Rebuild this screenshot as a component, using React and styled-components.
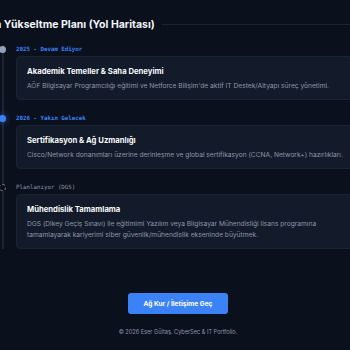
import React from "react";
import styled, { createGlobalStyle } from "styled-components";

const Global = createGlobalStyle`
  html, body { margin: 0; padding: 0; background: #0b101d; overflow: hidden; }
  body { font-family: Inter, "Noto Sans", sans-serif; width: 350px; height: 350px; }
  #root { width: 350px; }
`;

const Page = styled.div`
  width: 350px;
  height: 350px;
  background: #0b101d;
  display: flex;
  flex-direction: column;
`;

const HeaderRow = styled.div`
  display: flex;
  align-items: center;
  gap: 7px;
  margin-top: 16px;
  margin-left: -53px;
  height: 16px;
`;

const Title = styled.h2`
  margin: 0;
  font-size: 10.5px;
  font-weight: 700;
  color: #f1f5f9;
  white-space: nowrap;
`;

const Rule = styled.div`
  flex: 1;
  height: 1px;
  background: #1a2233;
`;

const Timeline = styled.div`
  margin-top: 13px;
  margin-left: 2px;
  margin-right: -4px;
  padding-left: 12px;
  border-left: 2px solid #1c2434;
  display: flex;
  flex-direction: column;
  gap: 14px;
`;

const Item = styled.div`
  position: relative;
  display: flex;
  flex-direction: column;
  gap: 3px;
`;

const Dot = styled.span`
  position: absolute;
  left: -17.5px;
  top: 0.5px;
  width: 7px;
  height: 7px;
  border-radius: 50%;
  box-sizing: border-box;
  background: ${(p) => (p.$kind === "active" ? "#3b82f6" : p.$kind === "done" ? "#94a3b8" : "#0b101d")};
  border: ${(p) => (p.$kind === "planned" ? "1px dashed #64748b" : "none")};
  box-shadow: ${(p) => (p.$kind === "active" ? "0 0 6px rgba(59,130,246,0.7)" : "none")};
`;

const DateLabel = styled.div`
  font-family: "DejaVu Sans Mono", "Liberation Mono", monospace;
  font-size: 5.8px;
  line-height: 8px;
  font-weight: ${(p) => (p.$muted ? 400 : 700)};
  color: ${(p) => (p.$muted ? "#8b95a7" : "#3b82f6")};
  white-space: nowrap;
`;

const Card = styled.div`
  background: #131a29;
  border: 1px solid #1a2233;
  border-radius: 4px;
  padding: 9px 10px 7px 10px;
  display: flex;
  flex-direction: column;
  gap: 3px;
`;

const CardTitle = styled.h3`
  margin: 0;
  font-size: 7.7px;
  line-height: 12px;
  font-weight: 700;
  color: #f8fafc;
`;

const CardText = styled.p`
  margin: 0;
  font-size: 6.65px;
  line-height: 11px;
  color: #8d97aa;
`;

const Actions = styled.div`
  display: flex;
  justify-content: center;
  margin-top: 44px;
  padding-left: 6px;
`;

const Button = styled.button`
  width: 100px;
  height: 21px;
  border: none;
  border-radius: 3px;
  background: #3b82f6;
  color: #ffffff;
  font-family: Inter, "Noto Sans", sans-serif;
  font-size: 6.6px;
  font-weight: 700;
  cursor: pointer;
`;

const Footer = styled.footer`
  margin-top: 14px;
  text-align: center;
  padding-left: 6px;
  font-size: 5.6px;
  line-height: 8px;
  color: #8d97aa;
`;

const items = [
  {
    kind: "done",
    date: "2025 - Devam Ediyor",
    title: "Akademik Temeller & Saha Deneyimi",
    text: "AÖF Bilgisayar Programcılığı eğitimi ve Netforce Bilişim'de aktif IT Destek/Altyapı süreç yönetimi.",
  },
  {
    kind: "active",
    date: "2026 - Yakın Gelecek",
    title: "Sertifikasyon & Ağ Uzmanlığı",
    text: "Cisco/Network donanımları üzerine derinleşme ve global sertifikasyon (CCNA, Network+) hazırlıkları.",
  },
  {
    kind: "planned",
    date: "Planlanıyor (DGS)",
    title: "Mühendislik Tamamlama",
    text: "DGS (Dikey Geçiş Sınavı) ile eğitimimi Yazılım veya Bilgisayar Mühendisliği lisans programına tamamlayarak kariyerimi siber güvenlik/mühendislik ekseninde büyütmek.",
  },
];

export default function App() {
  return (
    <>
      <Global />
      <Page>
        <HeaderRow>
          <Title>Uzmanlığa Yükseltme Planı (Yol Haritası)</Title>
          <Rule />
        </HeaderRow>
        <Timeline>
          {items.map((it) => (
            <Item key={it.title}>
              <Dot $kind={it.kind} />
              <DateLabel $muted={it.kind === "planned"}>{it.date}</DateLabel>
              <Card>
                <CardTitle>{it.title}</CardTitle>
                <CardText>{it.text}</CardText>
              </Card>
            </Item>
          ))}
        </Timeline>
        <Actions>
          <Button>Ağ Kur / İletişime Geç</Button>
        </Actions>
        <Footer>© 2026 Eser Gültaş. CyberSec &amp; IT Portfolio.</Footer>
      </Page>
    </>
  );
}
